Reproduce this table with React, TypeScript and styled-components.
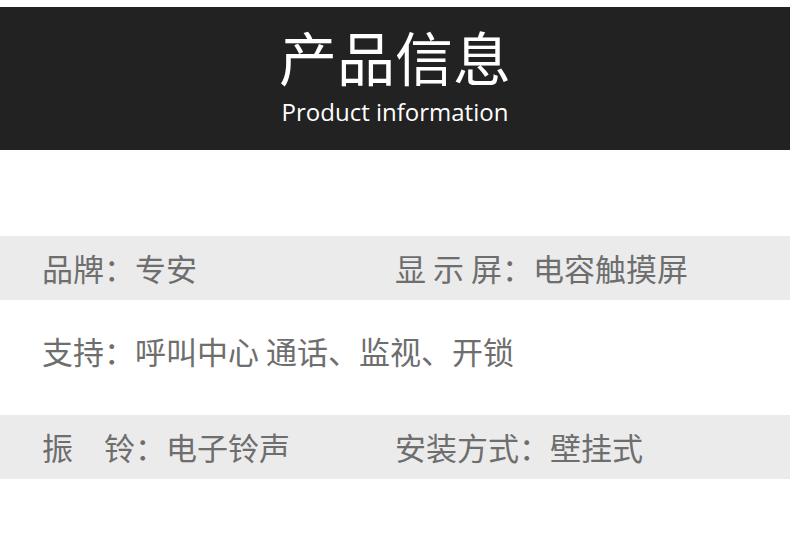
import styled, { createGlobalStyle } from "styled-components";

const GlobalStyle = createGlobalStyle`
  html, body {
    margin: 0;
    padding: 0;
    background: #ffffff;
  }
  body {
    font-family: "Noto Sans CJK SC", "Noto Sans", sans-serif;
  }
`;

interface Spec {
  label: string;
  value: string;
}

const rows: { shaded: boolean; top: number; bottom: number; items: Spec[] }[] = [
  {
    shaded: true,
    top: 86,
    bottom: 0,
    items: [
      { label: "品牌：", value: "专安" },
      { label: "显 示 屏：", value: "电容触摸屏" },
    ],
  },
  {
    shaded: false,
    top: 19,
    bottom: 32,
    items: [{ label: "支持：", value: "呼叫中心 通话、监视、开锁" }],
  },
  {
    shaded: true,
    top: 0,
    bottom: 0,
    items: [
      { label: "振\u3000铃：", value: "电子铃声" },
      { label: "安装方式：", value: "壁挂式" },
    ],
  },
];

export default function App() {
  return (
    <>
      <GlobalStyle />
      <StyledPage>
        <StyledHeader>
          <StyledTitle>产品信息</StyledTitle>
          <StyledSubtitle>Product information</StyledSubtitle>
        </StyledHeader>
        {rows.map((row, i) => (
          <StyledRow key={i} $shaded={row.shaded} $top={row.top} $bottom={row.bottom}>
            {row.items.map((item) => (
              <StyledCell key={item.label}>
                {item.label}
                {item.value}
              </StyledCell>
            ))}
          </StyledRow>
        ))}
      </StyledPage>
    </>
  );
}

const StyledPage = styled.div`
  width: 790px;
  height: 538px;
  padding-top: 7px;
  box-sizing: border-box;
  overflow: hidden;
`;

const StyledHeader = styled.header`
  height: 143px;
  background: #222222;
  color: #ffffff;
  display: flex;
  flex-direction: column;
  align-items: center;
`;

const StyledTitle = styled.h1`
  margin: 14px 0 0;
  font-size: 58px;
  font-weight: 400;
  line-height: 70px;
  letter-spacing: 0;
`;

const StyledSubtitle = styled.p`
  margin: 6px 0 0;
  font-family: "Open Sans", "Noto Sans", sans-serif;
  font-size: 24px;
  line-height: 30px;
  letter-spacing: 0;
`;

const StyledRow = styled.div<{ $shaded: boolean; $top: number; $bottom: number }>`
  height: 64px;
  margin: ${(p) => p.$top}px 0 ${(p) => p.$bottom}px;
  padding-left: 42px;
  display: grid;
  grid-template-columns: 353px auto;
  align-items: center;
  background: ${(p) => (p.$shaded ? "#ebebeb" : "transparent")};
`;

const StyledCell = styled.div`
  font-size: 31px;
  line-height: 40px;
  color: #6e6e6e;
  white-space: nowrap;
`;
